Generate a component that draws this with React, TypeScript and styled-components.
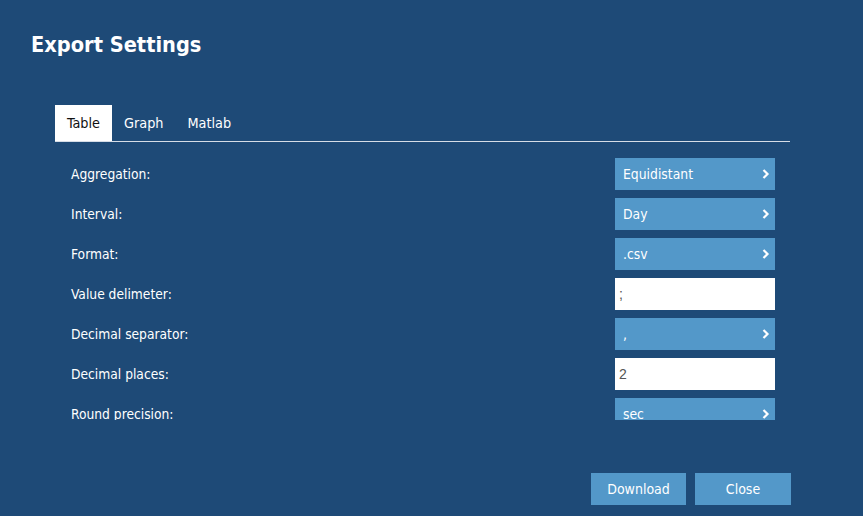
import React from "react";
import styled, { createGlobalStyle } from "styled-components";

const Global = createGlobalStyle`
  html, body { margin: 0; padding: 0; background: #1e4a77; }
  body { font-family: "DejaVu Sans Condensed", "DejaVu Sans", sans-serif; color: #fff; }
  * { box-sizing: border-box; }
`;

const Page = styled.div`
  width: 863px;
  height: 516px;
  padding: 30px 0 0 31px;
  overflow: hidden;
`;

const Title = styled.h1`
  margin: 0;
  font-size: 21.6px;
  line-height: 30px;
  font-weight: bold;
  color: #fff;
`;

const Panel = styled.div`
  margin: 45px 0 0 24px;
  width: 736px;
`;

const TabBar = styled.div`
  display: flex;
  height: 37px;
  border-bottom: 1px solid #d6dde6;
  margin-right: 1px;
`;

const Tab = styled.div<{ $active?: boolean }>`
  display: flex;
  align-items: center;
  height: 36px;
  padding: 0 12px;
  font-size: 14.3px;
  background: ${(p) => (p.$active ? "#fff" : "transparent")};
  color: ${(p) => (p.$active ? "#111" : "#fff")};
`;

const Scroll = styled.div`
  height: 278px;
  overflow: hidden;
  padding: 16px 16px 0 16px;
  display: flex;
  flex-direction: column;
  gap: 8px;
`;

const Row = styled.div`
  display: flex;
  align-items: center;
  justify-content: space-between;
  height: 32px;
  flex-shrink: 0;
`;

const Label = styled.span`
  font-size: 13.7px;
  color: #fff;
`;

const Select = styled.div`
  width: 160px;
  height: 32px;
  background: #5398c9;
  display: flex;
  align-items: center;
  justify-content: space-between;
  padding: 0 5px 0 8px;
  font-size: 13.8px;
  color: #fff;
`;

const Input = styled.div`
  width: 160px;
  height: 32px;
  background: #fff;
  display: flex;
  align-items: center;
  padding: 0 4px;
  font-family: "Liberation Sans", Arial, sans-serif;
  font-size: 14px;
  color: #555;
`;

const Footer = styled.div`
  display: flex;
  justify-content: flex-end;
  gap: 9px;
  margin-top: 53px;
`;

const Button = styled.div<{ $w: number }>`
  width: ${(p) => p.$w}px;
  height: 32px;
  background: #5398c9;
  color: #fff;
  font-size: 14px;
  display: flex;
  align-items: center;
  justify-content: center;
`;

const Chevron = () => (
  <svg width="9" height="12" viewBox="0 0 9 12">
    <polyline points="2.5,2 6.5,6 2.5,10" fill="none" stroke="#fff" strokeWidth="2.2" />
  </svg>
);

type Item = { label: string; kind: "select" | "input"; value: string };

const items: Item[] = [
  { label: "Aggregation:", kind: "select", value: "Equidistant" },
  { label: "Interval:", kind: "select", value: "Day" },
  { label: "Format:", kind: "select", value: ".csv" },
  { label: "Value delimeter:", kind: "input", value: ";" },
  { label: "Decimal separator:", kind: "select", value: "," },
  { label: "Decimal places:", kind: "input", value: "2" },
  { label: "Round precision:", kind: "select", value: "sec" },
];

export default function App() {
  return (
    <>
      <Global />
      <Page>
        <Title>Export Settings</Title>
        <Panel>
          <TabBar>
            <Tab $active>Table</Tab>
            <Tab>Graph</Tab>
            <Tab>Matlab</Tab>
          </TabBar>
          <Scroll>
            {items.map((it) => (
              <Row key={it.label}>
                <Label>{it.label}</Label>
                {it.kind === "select" ? (
                  <Select>
                    <span>{it.value}</span>
                    <Chevron />
                  </Select>
                ) : (
                  <Input>{it.value}</Input>
                )}
              </Row>
            ))}
          </Scroll>
          <Footer>
            <Button $w={95}>Download</Button>
            <Button $w={96}>Close</Button>
          </Footer>
        </Panel>
      </Page>
    </>
  );
}
